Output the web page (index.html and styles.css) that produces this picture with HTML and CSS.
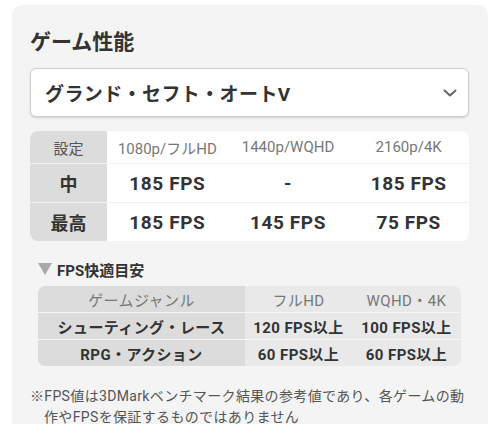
FILE: index.html
```html
<!DOCTYPE html>
<html lang="ja">
<head>
<meta charset="utf-8">
<link rel="stylesheet" href="styles.css">
</head>
<body>
<div class="card">
  <h2 class="title">ゲーム性能</h2>
  <div class="select">
    <span class="select-text">グランド・セフト・オートV</span>
    <svg class="chev" width="14" height="8" viewBox="0 0 14 8"><path d="M1.5 1.5 L7 6.5 L12.5 1.5" fill="none" stroke="#666" stroke-width="2" stroke-linecap="round" stroke-linejoin="round"/></svg>
  </div>

  <div class="perf">
    <div class="c lab head">設定</div>
    <div class="c hd">1080p/フルHD</div>
    <div class="c hd">1440p/WQHD</div>
    <div class="c hd">2160p/4K</div>

    <div class="c lab row">中</div>
    <div class="c val row">185 FPS</div>
    <div class="c val row">-</div>
    <div class="c val row">185 FPS</div>

    <div class="c lab row last">最高</div>
    <div class="c val row last">185 FPS</div>
    <div class="c val row last">145 FPS</div>
    <div class="c val row last">75 FPS</div>
  </div>

  <div class="guide">
    <div class="guide-head"><span class="tri"></span>FPS快適目安</div>
    <div class="gtable">
      <div class="g g1 ghead">ゲームジャンル</div>
      <div class="g g2 ghead">フルHD</div>
      <div class="g g2 ghead">WQHD・4K</div>

      <div class="g g1">シューティング・レース</div>
      <div class="g g2">120 FPS以上</div>
      <div class="g g2">100 FPS以上</div>

      <div class="g g1 glast">RPG・アクション</div>
      <div class="g g2 glast">60 FPS以上</div>
      <div class="g g2 glast">60 FPS以上</div>
    </div>
  </div>

  <p class="note">※FPS値は3DMarkベンチマーク結果の参考値であり、各ゲームの動作やFPSを保証するものではありません</p>
</div>
</body>
</html>
```

FILE: styles.css
```css
* { box-sizing: border-box; }
html, body { margin: 0; padding: 0; background: #fff; }
body {
  font-family: Roboto, "Noto Sans CJK JP", sans-serif;
  color: #333;
  height: 424px;
  overflow: hidden;
}
.card {
  margin: 5px 0 0 12px;
  width: 476px;
  height: 419px;
  background: #f4f4f4;
  border-radius: 10px 10px 0 0;
  padding: 22px 19px 0 18px;
  overflow: hidden;
}
.title {
  margin: 0;
  font-size: 21px;
  font-weight: 700;
  line-height: 31px;
  color: #333;
}
.select {
  margin-top: 10px;
  height: 49px;
  background: #fff;
  border: 1px solid #cfcfcf;
  border-radius: 6px;
  box-shadow: 0 1px 2px rgba(0,0,0,0.15);
  display: flex;
  align-items: center;
  justify-content: space-between;
  padding: 0 11px 0 14px;
}
.select-text {
  font-size: 19px;
  font-weight: 700;
  color: #333;
  letter-spacing: 0.4px;
}
.chev { display: block; }

.perf {
  margin-top: 14px;
  display: grid;
  grid-template-columns: 77px repeat(3, 1fr);
  grid-template-rows: 32px 39px 39px;
  border-radius: 8px;
  overflow: hidden;
  background: #fff;
}
.c {
  display: flex;
  align-items: center;
  justify-content: center;
  border-top: 1px solid #efefef;
}
.head, .hd { border-top: none; }
.lab {
  background: #dcdcdc;
  font-size: 18px;
  font-weight: 700;
  color: #333;
}
.lab.row { border-top: 1px solid #f0f0f0; }
.lab.head {
  font-size: 15px;
  font-weight: 400;
  color: #555;
}
.hd {
  font-size: 15px;
  color: #777;
}
.val {
  font-size: 19px;
  font-weight: 700;
  color: #333;
  letter-spacing: 0.6px;
}

.guide { padding: 0 8px; }
.guide-head {
  margin-top: 17px;
  height: 22px;
  display: flex;
  align-items: center;
  font-size: 15px;
  font-weight: 700;
  color: #333;
}
.tri {
  width: 0;
  height: 0;
  border-left: 7px solid transparent;
  border-right: 7px solid transparent;
  border-top: 12px solid #aaa;
  margin-right: 5px;
}
.gtable {
  margin-top: 6px;
  display: grid;
  grid-template-columns: 207px 107px 1fr;
  grid-template-rows: 26px 27px 27px;
  border-radius: 7px;
  overflow: hidden;
}
.g {
  display: flex;
  align-items: center;
  justify-content: center;
  font-size: 15px;
  font-weight: 700;
  color: #333;
  letter-spacing: 0.4px;
  border-top: 1px solid #f6f6f6;
}
.g1 { background: #dcdcdc; }
.g2 { background: #e9e9e9; }
.ghead {
  border-top: none;
  font-weight: 400;
  color: #777;
}

.note {
  margin: 20px 0 0;
  padding-left: 14px;
  text-indent: -14px;
  font-size: 14px;
  line-height: 21px;
  color: #555;
  letter-spacing: 0.35px;
}
```
